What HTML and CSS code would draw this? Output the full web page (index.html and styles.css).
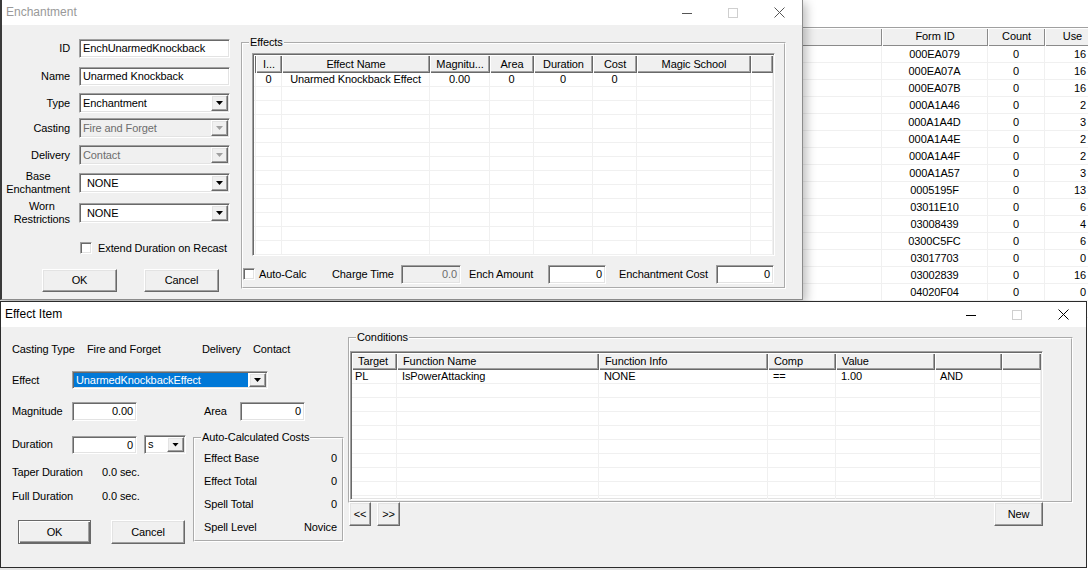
FILE: index.html
```html
<!DOCTYPE html>
<html>
<head>
<meta charset="utf-8">
<title>Enchantment</title>
<link rel="stylesheet" href="styles.css">
</head>
<body>
<div class="desktop">

  <!-- background application list -->
  <div class="bgwin">
    <div class="bg-top"></div>
    <div class="bg-head">
      <div class="hd c-blank"></div><div class="hd c-form">Form ID</div><div class="hd c-count">Count</div><div class="hd c-use">Use</div>
    </div>
    <div class="bg-row"><div class="c-blank"></div><div class="c-form">000EA079</div><div class="c-count">0</div><div class="c-use">16</div></div>
    <div class="bg-row"><div class="c-blank"></div><div class="c-form">000EA07A</div><div class="c-count">0</div><div class="c-use">16</div></div>
    <div class="bg-row"><div class="c-blank"></div><div class="c-form">000EA07B</div><div class="c-count">0</div><div class="c-use">16</div></div>
    <div class="bg-row"><div class="c-blank"></div><div class="c-form">000A1A46</div><div class="c-count">0</div><div class="c-use">2</div></div>
    <div class="bg-row"><div class="c-blank"></div><div class="c-form">000A1A4D</div><div class="c-count">0</div><div class="c-use">3</div></div>
    <div class="bg-row"><div class="c-blank"></div><div class="c-form">000A1A4E</div><div class="c-count">0</div><div class="c-use">2</div></div>
    <div class="bg-row"><div class="c-blank"></div><div class="c-form">000A1A4F</div><div class="c-count">0</div><div class="c-use">2</div></div>
    <div class="bg-row"><div class="c-blank"></div><div class="c-form">000A1A57</div><div class="c-count">0</div><div class="c-use">3</div></div>
    <div class="bg-row"><div class="c-blank"></div><div class="c-form">0005195F</div><div class="c-count">0</div><div class="c-use">13</div></div>
    <div class="bg-row"><div class="c-blank"></div><div class="c-form">03011E10</div><div class="c-count">0</div><div class="c-use">6</div></div>
    <div class="bg-row"><div class="c-blank"></div><div class="c-form">03008439</div><div class="c-count">0</div><div class="c-use">4</div></div>
    <div class="bg-row"><div class="c-blank"></div><div class="c-form">0300C5FC</div><div class="c-count">0</div><div class="c-use">6</div></div>
    <div class="bg-row"><div class="c-blank"></div><div class="c-form">03017703</div><div class="c-count">0</div><div class="c-use">0</div></div>
    <div class="bg-row"><div class="c-blank"></div><div class="c-form">03002839</div><div class="c-count">0</div><div class="c-use">16</div></div>
    <div class="bg-row"><div class="c-blank"></div><div class="c-form">04020F04</div><div class="c-count">0</div><div class="c-use">0</div></div>
    <div class="bg-row"><div class="c-blank"></div><div class="c-form">04020F05</div><div class="c-count">0</div><div class="c-use">0</div></div>
  </div>

  <!-- Enchantment dialog (inactive) -->
  <div class="win win-ench">
    <div class="titlebar">
      <span class="title inactive">Enchantment</span>
      <div class="caps">
        <span class="cap"><svg width="10" height="10" viewBox="0 0 10 10"><path d="M0 5.5H10" stroke="#555" stroke-width="1"/></svg></span>
        <span class="cap"><svg width="10" height="10" viewBox="0 0 10 10"><rect x="0.5" y="0.5" width="9" height="9" fill="none" stroke="#cfcfcf"/></svg></span>
        <span class="cap"><svg width="11" height="11" viewBox="0 0 11 11"><path d="M0.5 0.5L10.5 10.5M10.5 0.5L0.5 10.5" stroke="#555" stroke-width="1"/></svg></span>
      </div>
    </div>
    <div class="ench-body">
      <div class="ench-left">
        <div class="form-grid">
          <div class="lbl">ID</div>
          <div class="edit sunken">EnchUnarmedKnockback</div>
          <div class="lbl">Name</div>
          <div class="edit sunken">Unarmed Knockback</div>
          <div class="lbl">Type</div>
          <div class="combo sunken"><span class="ctext">Enchantment</span><span class="drop raised"></span></div>
          <div class="lbl">Casting</div>
          <div class="combo sunken disabled"><span class="ctext">Fire and Forget</span><span class="drop raised"></span></div>
          <div class="lbl">Delivery</div>
          <div class="combo sunken disabled"><span class="ctext">Contact</span><span class="drop raised"></span></div>
          <div class="lbl"><span class="two">Base<br>Enchantment</span></div>
          <div class="combo sunken"><span class="ctext pad">NONE</span><span class="drop raised"></span></div>
          <div class="lbl"><span class="two">Worn<br>Restrictions</span></div>
          <div class="combo sunken"><span class="ctext pad">NONE</span><span class="drop raised"></span></div>
          <div></div>
          <div class="check-row"><span class="checkbox sunken"></span><span>Extend Duration on Recast</span></div>
        </div>
        <div class="ench-btns">
          <button class="btn raised w75">OK</button>
          <button class="btn raised w75">Cancel</button>
        </div>
      </div>

      <fieldset class="group effects">
        <legend>Effects</legend>
        <div class="lv sunken effects-lv">
          <table class="grid">
            <colgroup><col class="e0"><col class="e1"><col class="e2"><col class="e3"><col class="e4"><col class="e5"><col class="e6"><col class="e7"><col class="e8"></colgroup>
            <thead><tr><th></th><th>I...</th><th>Effect Name</th><th>Magnitu...</th><th>Area</th><th>Duration</th><th>Cost</th><th>Magic School</th><th></th></tr></thead>
            <tbody class="center">
              <tr><td></td><td>0</td><td>Unarmed Knockback Effect</td><td>0.00</td><td>0</td><td>0</td><td>0</td><td></td><td></td></tr>
              <tr><td></td><td></td><td></td><td></td><td></td><td></td><td></td><td></td><td></td></tr>
              <tr><td></td><td></td><td></td><td></td><td></td><td></td><td></td><td></td><td></td></tr>
              <tr><td></td><td></td><td></td><td></td><td></td><td></td><td></td><td></td><td></td></tr>
              <tr><td></td><td></td><td></td><td></td><td></td><td></td><td></td><td></td><td></td></tr>
              <tr><td></td><td></td><td></td><td></td><td></td><td></td><td></td><td></td><td></td></tr>
              <tr><td></td><td></td><td></td><td></td><td></td><td></td><td></td><td></td><td></td></tr>
              <tr><td></td><td></td><td></td><td></td><td></td><td></td><td></td><td></td><td></td></tr>
              <tr><td></td><td></td><td></td><td></td><td></td><td></td><td></td><td></td><td></td></tr>
              <tr><td></td><td></td><td></td><td></td><td></td><td></td><td></td><td></td><td></td></tr>
              <tr><td></td><td></td><td></td><td></td><td></td><td></td><td></td><td></td><td></td></tr>
              <tr><td></td><td></td><td></td><td></td><td></td><td></td><td></td><td></td><td></td></tr>
              <tr><td></td><td></td><td></td><td></td><td></td><td></td><td></td><td></td><td></td></tr>
              <tr><td></td><td></td><td></td><td></td><td></td><td></td><td></td><td></td><td></td></tr>
            </tbody>
          </table>
        </div>
        <div class="calc-row">
          <span class="checkbox sunken"></span>
          <span class="t-auto">Auto-Calc</span>
          <span class="t-charge">Charge Time</span>
          <span class="edit sunken num disabled w60">0.0</span>
          <span class="t-ench">Ench Amount</span>
          <span class="edit sunken num w58">0</span>
          <span class="t-cost">Enchantment Cost</span>
          <span class="edit sunken num w58">0</span>
        </div>
      </fieldset>
    </div>
  </div>

  <!-- Effect Item dialog (active) -->
  <div class="win win-effect">
    <div class="titlebar">
      <span class="title">Effect Item</span>
      <div class="caps">
        <span class="cap"><svg width="10" height="10" viewBox="0 0 10 10"><path d="M0 5.5H10" stroke="#000" stroke-width="1"/></svg></span>
        <span class="cap"><svg width="10" height="10" viewBox="0 0 10 10"><rect x="0.5" y="0.5" width="9" height="9" fill="none" stroke="#cfcfcf"/></svg></span>
        <span class="cap"><svg width="11" height="11" viewBox="0 0 11 11"><path d="M0.5 0.5L10.5 10.5M10.5 0.5L0.5 10.5" stroke="#000" stroke-width="1"/></svg></span>
      </div>
    </div>
    <div class="eff-body">
      <div class="eff-left">
        <div class="info-row">
          <span class="i-lbl">Casting Type</span>
          <span class="i-val">Fire and Forget</span>
          <span class="i-lbl2">Delivery</span>
          <span>Contact</span>
        </div>
        <div class="field-row r-effect">
          <span class="flbl">Effect</span>
          <div class="combo sunken sel w196"><span class="ctext">UnarmedKnockbackEffect</span><span class="drop raised"></span></div>
        </div>
        <div class="field-row r-mag">
          <span class="flbl">Magnitude</span>
          <span class="edit sunken num w65">0.00</span>
          <span class="flbl-area">Area</span>
          <span class="edit sunken num w65">0</span>
        </div>
        <div class="eff-lower">
          <div class="lower-left">
            <div class="field-row r-dur">
              <span class="flbl">Duration</span>
              <span class="edit sunken num w65">0</span>
              <div class="combo sunken unit"><span class="ctext">s</span><span class="drop raised"></span></div>
            </div>
            <div class="text-row r-taper"><span class="tlbl">Taper Duration</span><span>0.0 sec.</span></div>
            <div class="text-row r-full"><span class="tlbl">Full Duration</span><span>0.0 sec.</span></div>
            <div class="eff-btns">
              <button class="btn raised default ok">OK</button>
              <button class="btn raised cancel">Cancel</button>
            </div>
          </div>
          <fieldset class="group costs">
            <legend>Auto-Calculated Costs</legend>
            <div class="cost-row"><span>Effect Base</span><span>0</span></div>
            <div class="cost-row"><span>Effect Total</span><span>0</span></div>
            <div class="cost-row"><span>Spell Total</span><span>0</span></div>
            <div class="cost-row"><span>Spell Level</span><span>Novice</span></div>
          </fieldset>
        </div>
      </div>

      <div class="eff-right">
        <fieldset class="group conditions">
          <legend>Conditions</legend>
          <div class="lv sunken cond-lv">
            <table class="grid left">
              <colgroup><col class="k1"><col class="k2"><col class="k3"><col class="k4"><col class="k5"><col class="k6"><col class="k7"></colgroup>
              <thead><tr><th>Target</th><th>Function Name</th><th>Function Info</th><th>Comp</th><th>Value</th><th></th><th></th></tr></thead>
              <tbody>
                <tr><td>PL</td><td>IsPowerAttacking</td><td>NONE</td><td>==</td><td>1.00</td><td>AND</td><td></td></tr>
                <tr><td></td><td></td><td></td><td></td><td></td><td></td><td></td></tr>
                <tr><td></td><td></td><td></td><td></td><td></td><td></td><td></td></tr>
                <tr><td></td><td></td><td></td><td></td><td></td><td></td><td></td></tr>
                <tr><td></td><td></td><td></td><td></td><td></td><td></td><td></td></tr>
                <tr><td></td><td></td><td></td><td></td><td></td><td></td><td></td></tr>
                <tr><td></td><td></td><td></td><td></td><td></td><td></td><td></td></tr>
                <tr><td></td><td></td><td></td><td></td><td></td><td></td><td></td></tr>
                <tr><td></td><td></td><td></td><td></td><td></td><td></td><td></td></tr>
                <tr><td></td><td></td><td></td><td></td><td></td><td></td><td></td></tr>
              </tbody>
            </table>
          </div>
        </fieldset>
        <div class="cond-btns">
          <button class="btn raised prev">&lt;&lt;</button>
          <button class="btn raised next">&gt;&gt;</button>
          <span class="spacer"></span>
          <button class="btn raised new">New</button>
        </div>
      </div>
    </div>
  </div>

</div>
</body>
</html>
```

FILE: styles.css
```css
* { box-sizing: border-box; }
html, body { margin: 0; padding: 0; }
body {
  width: 1088px;
  height: 570px;
  overflow: hidden;
  font-family: "Liberation Sans", Arial, sans-serif;
  font-size: 11px;
  line-height: 13px;
  letter-spacing: -0.1px;
  color: #000;
  background: #f0f0f0;
}
.desktop {
  position: relative;
  width: 1088px;
  height: 570px;
  overflow: hidden;
  background: #e4e4e4;
}

/* ---------- shared win32 primitives ---------- */
.sunken {
  border: 1px solid;
  border-color: #a0a0a0 #ffffff #ffffff #a0a0a0;
  box-shadow: inset 1px 1px 0 #696969, inset -1px -1px 0 #e3e3e3;
  background: #fff;
}
.raised {
  background: #f0f0f0;
  border: 1px solid;
  border-color: #ffffff #696969 #696969 #ffffff;
  box-shadow: inset -1px -1px 0 #a0a0a0, inset 1px 1px 0 #e3e3e3;
}
.btn {
  font: inherit;
  letter-spacing: inherit;
  color: #000;
  padding: 0;
  margin: 0;
  height: 23px;
  text-align: center;
}
.btn.default {
  border: 1px solid #696969;
  box-shadow: inset 1px 1px 0 #fff, inset -1px -1px 0 #696969, inset -2px -2px 0 #a0a0a0;
}
.w75 { width: 75px; }

.edit {
  display: block;
  height: 19px;
  padding: 2px 3px;
  line-height: 13px;
  white-space: nowrap;
  overflow: hidden;
}
.edit.num { text-align: right; }
.edit.disabled { background: #f0f0f0; color: #6d6d6d; }
.w58 { width: 58px; }
.w60 { width: 60px; }
.w65 { width: 65px; }

.combo {
  display: flex;
  height: 20px;
  padding: 1px;
}
.combo .ctext {
  flex: 1;
  padding-left: 2px;
  line-height: 16px;
  white-space: nowrap;
  overflow: hidden;
}
.combo .ctext.pad { padding-left: 6px; }
.drop {
  width: 17px;
  flex: none;
  display: flex;
  align-items: center;
  justify-content: center;
}
.drop::after {
  content: "";
  width: 7px;
  height: 4px;
  background: #000;
  clip-path: polygon(0 0, 100% 0, 50% 100%);
}
.combo.disabled { background: #f0f0f0; color: #6d6d6d; }
.combo.disabled .drop::after { background: #a0a0a0; }

.checkbox {
  display: block;
  width: 12px;
  height: 12px;
  flex: none;
}

fieldset.group {
  margin: 0;
  border: 2px groove #ffffff;
  min-width: 0;
}
fieldset.group legend {
  padding: 0 1px;
  line-height: 13px;
  font-size: 11px;
}

/* ---------- windows ---------- */
.win {
  position: absolute;
  background: #f0f0f0;
  display: flex;
  flex-direction: column;
}
.titlebar {
  display: flex;
  align-items: center;
  background: #fff;
  flex: none;
}
.title {
  font-family: "Liberation Sans", Arial, sans-serif;
  font-size: 12px;
  letter-spacing: 0;
  padding-left: 4px;
  flex: 1;
}
.title.inactive { color: #999; }
.caps { display: flex; align-self: stretch; }
.cap {
  width: 46px;
  display: flex;
  align-items: center;
  justify-content: center;
}
.cap svg { display: block; }

/* ---------- background list ---------- */
.bgwin {
  position: absolute;
  left: 760px;
  top: 0;
  width: 340px;
  height: 570px;
  background: #fff;
}
.bg-top { height: 28px; border-bottom: 1px solid #a0a0a0; }
.bg-head { display: flex; height: 18px; }
.hd {
  background: #f0f0f0;
  text-align: center;
  line-height: 17px;
  box-shadow: inset 1px 1px 0 #fff, inset -1px -1px 0 #8a8a8a;
  white-space: nowrap;
  overflow: hidden;
}
.bg-row {
  display: flex;
  height: 17px;
  line-height: 16px;
}
.bg-row > div {
  border-right: 1px solid #f0f0f0;
  border-bottom: 1px solid #f0f0f0;
  text-align: center;
}
.c-blank { width: 122px; }
.c-form { width: 106px; }
.c-count { width: 57px; }
.c-use { width: 55px; }
.bg-row > .c-use { text-align: right; padding-right: 13px; }

/* ---------- Enchantment ---------- */
.win-ench {
  left: 0;
  top: 0;
  width: 803px;
  height: 300px;
  border: 1px solid #8c8c8c;
  border-top: none;
  border-left: 2px solid #3a3a3a;
  box-shadow: 3px 3px 10px rgba(0, 0, 0, 0.28);
}
.win-ench .titlebar { height: 25px; }
.ench-body {
  flex: 1;
  display: flex;
  align-items: flex-start;
  padding-top: 9px;
}
.ench-left { width: 239px; flex: none; }
.form-grid {
  display: grid;
  grid-template-columns: 68px 151px;
  column-gap: 9px;
  grid-template-rows: 28px 28px 26px 24px 30px 26px 34px 36px;
  align-items: center;
}
.lbl { text-align: right; white-space: nowrap; }
.lbl .two { display: inline-block; text-align: center; line-height: 13px; }
.check-row { display: flex; align-items: center; gap: 6px; padding-left: 1px; }
.ench-btns { display: flex; gap: 27px; padding-left: 40px; margin-top: 3px; }

fieldset.effects {
  width: 545px;
  margin-top: 2px;
  padding: 4px 9px 3px 9px;
}
fieldset.effects legend { margin-left: -3px; }

.lv { padding: 1px; overflow: hidden; }
.effects-lv { width: 523px; height: 203px; }
table.grid {
  border-collapse: separate;
  border-spacing: 0;
  table-layout: fixed;
  width: 100%;
}
table.grid th {
  height: 18px;
  padding: 0;
  font-weight: normal;
  background: #f0f0f0;
  box-shadow: inset 1px 1px 0 #fff, inset -1px -1px 0 #696969, inset -2px -2px 0 #a0a0a0;
  white-space: nowrap;
  overflow: hidden;
  text-align: center;
}
table.grid td {
  height: 14px;
  padding: 0;
  border-right: 1px solid #f0f0f0;
  border-bottom: 1px solid #f0f0f0;
  white-space: nowrap;
  overflow: hidden;
  line-height: 13px;
}
.center td { text-align: center; }
.effects-lv col.e0 { width: 2px; }
.effects-lv col.e1 { width: 26px; }
.effects-lv col.e2 { width: 148px; }
.effects-lv col.e3 { width: 60px; }
.effects-lv col.e4 { width: 44px; }
.effects-lv col.e5 { width: 59px; }
.effects-lv col.e6 { width: 44px; }
.effects-lv col.e7 { width: 114px; }
.effects-lv col.e8 { width: 22px; }

.calc-row {
  display: flex;
  align-items: center;
  height: 20px;
  margin-top: 8px;
  margin-left: -9px;
}
.t-auto { width: 77px; padding-left: 4px; }
.t-charge { width: 69px; }
.t-ench { width: 79px; margin-left: 8px; }
.t-cost { width: 97px; margin-left: 13px; }

/* ---------- Effect Item ---------- */
.win-effect {
  left: 0;
  top: 301px;
  width: 1087px;
  height: 267px;
  border: 1px solid #2b2b2b;
}
.win-effect .titlebar { height: 25px; }
.eff-body { flex: 1; display: flex; align-items: flex-start; }
.eff-left { width: 347px; flex: none; padding-left: 11px; }
.info-row { display: flex; height: 16px; align-items: center; margin-top: 14px; white-space: nowrap; }
.i-lbl { width: 75px; }
.i-val { width: 115px; }
.i-lbl2 { width: 51px; }
.field-row { display: flex; align-items: center; }
.flbl { width: 60px; flex: none; }
.r-effect { margin-top: 14px; }
.r-mag { margin-top: 13px; }
.flbl-area { width: 36px; margin-left: 67px; }
.combo.sel { height: 18px; }
.combo.sel .ctext {
  background: #0078d7;
  color: #fff;
  line-height: 14px;
  margin-right: 1px;
}
.combo.sel .drop { width: 17px; }
.w196 { width: 196px; }
.combo.unit { width: 42px; height: 19px; margin-left: 7px; }
.combo.unit .ctext { line-height: 15px; }

.eff-lower { display: flex; align-items: flex-start; margin-top: 10px; margin-left: -11px; }
.lower-left { width: 192px; flex: none; padding-left: 11px; }
.r-dur { margin-top: 4px; }
.r-dur .edit { height: 18px; padding-top: 2px; }
.text-row { display: flex; height: 16px; align-items: center; }
.tlbl { width: 90px; }
.r-taper { margin-top: 10px; }
.r-full { margin-top: 8px; }
.eff-btns { display: flex; margin-top: 16px; padding-left: 6px; }
.eff-btns .btn { height: 24px; }
.btn.ok { width: 73px; }
.btn.cancel { width: 74px; margin-left: 20px; }

fieldset.costs {
  width: 151px;
  height: 111px;
  padding: 3px 5px 0 9px;
}
fieldset.costs legend { margin-left: -3px; }
.cost-row {
  display: flex;
  justify-content: space-between;
  height: 23px;
  align-items: center;
}

.eff-right { width: 725px; flex: none; }
fieldset.conditions {
  width: 725px;
  margin-top: 4px;
  padding: 7px 28px 1px 0;
}
fieldset.conditions legend { margin-left: 6px; }
.cond-lv { width: 693px; height: 149px; }
.cond-lv col.k1 { width: 45px; }
.cond-lv col.k2 { width: 202px; }
.cond-lv col.k3 { width: 169px; }
.cond-lv col.k4 { width: 68px; }
.cond-lv col.k5 { width: 99px; }
.cond-lv col.k6 { width: 67px; }
.cond-lv col.k7 { width: 39px; }
.cond-lv table.grid th { height: 17px; text-align: left; padding-left: 6px; }
.cond-lv table.grid td { padding-left: 5px; }
.cond-lv table.grid td:first-child { padding-left: 3px; }

.cond-btns {
  display: flex;
  margin-top: -1px;
  padding-right: 30px;
}
.cond-btns .btn { height: 24px; }
.btn.prev { width: 22px; margin-left: 1px; }
.btn.next { width: 23px; margin-left: 6px; }
.spacer { flex: 1; }
.btn.new { width: 49px; }
```
